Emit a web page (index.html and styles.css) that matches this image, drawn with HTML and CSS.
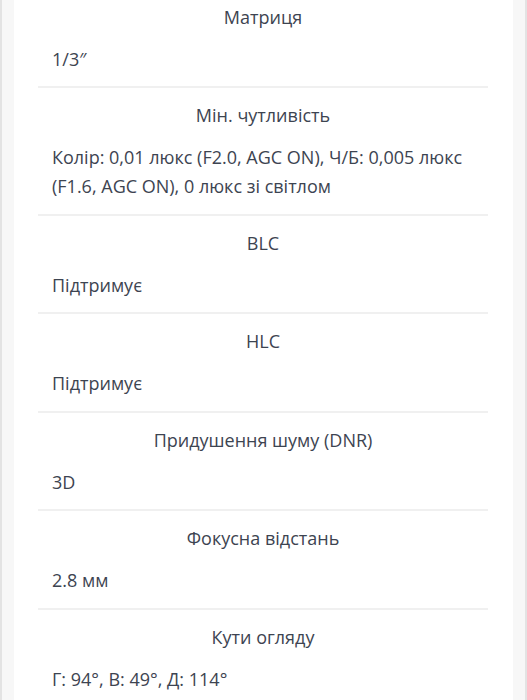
FILE: index.html
```html
<!DOCTYPE html>
<html lang="uk">
<head>
<meta charset="utf-8">
<link rel="stylesheet" href="styles.css">
</head>
<body>
<main class="card">
  <dl class="specs">
    <div class="spec first">
      <dt class="spec-title">Матриця</dt>
      <dd class="spec-value">1/3″</dd>
    </div>
    <div class="spec">
      <dt class="spec-title">Мін. чутливість</dt>
      <dd class="spec-value">Колір: 0,01 люкс (F2.0, AGC ON), Ч/Б: 0,005 люкс (F1.6, AGC ON), 0 люкс зі світлом</dd>
    </div>
    <div class="spec">
      <dt class="spec-title">BLC</dt>
      <dd class="spec-value">Підтримує</dd>
    </div>
    <div class="spec">
      <dt class="spec-title">HLC</dt>
      <dd class="spec-value">Підтримує</dd>
    </div>
    <div class="spec">
      <dt class="spec-title">Придушення шуму (DNR)</dt>
      <dd class="spec-value">3D</dd>
    </div>
    <div class="spec">
      <dt class="spec-title">Фокусна відстань</dt>
      <dd class="spec-value">2.8 мм</dd>
    </div>
    <div class="spec">
      <dt class="spec-title">Кути огляду</dt>
      <dd class="spec-value">Г: 94°, В: 49°, Д: 114°</dd>
    </div>
  </dl>
</main>
</body>
</html>
```

FILE: styles.css
```css
html, body {
  margin: 0;
  padding: 0;
}
body {
  background: #f7f7f7;
  border-left: 2px solid #e3e3e3;
  border-right: 2px solid #e3e3e3;
  min-height: 700px;
  box-sizing: border-box;
  font-family: "Open Sans", "Noto Sans", sans-serif;
  color: #3d4451;
  font-size: 18px;
}
.card {
  margin: 0 12px;
  background: #ffffff;
  min-height: 700px;
}
.specs {
  margin: 0;
  padding: 0 25px 0 24px;
}
.spec {
  padding: 13px 0 12.5px;
  border-bottom: 2px solid #f0f0f0;
}
.spec.first {
  padding-top: 2.5px;
}
.spec-title {
  text-align: center;
  line-height: 29px;
}
.spec-value {
  margin: 13px 0 0;
  padding: 0 14px;
  line-height: 29px;
}
```
